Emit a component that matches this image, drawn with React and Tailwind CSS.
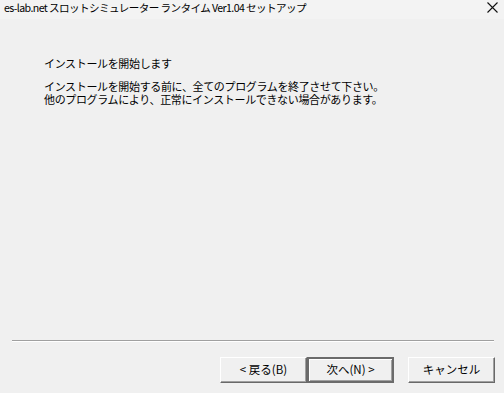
const font = { fontFamily: '"Noto Sans CJK JP", "Noto Sans", sans-serif' };

const WinButton = ({ children, isDefault }) => (
  <button
    className={`h-[26px] w-[87px] bg-[#f0f0f0] text-[11.5px] leading-none text-black flex items-center justify-center ${
      isDefault
        ? "border-2 border-[#6b6b6b] shadow-[inset_1px_1px_0_#ffffff,inset_-1px_-1px_0_#a0a0a0]"
        : "border-t border-l border-t-white border-l-white border-r border-b border-r-[#696969] border-b-[#696969] shadow-[inset_-1px_-1px_0_#a0a0a0]"
    }`}
    style={font}
  >
    {children}
  </button>
);

export default function App() {
  return (
    <div className="w-[504px] h-[393px] flex flex-col bg-[#f0f0f0] overflow-hidden" style={font}>
      {/* title bar */}
      <div className="h-[19px] bg-[#f3f3f3] flex items-start justify-between pl-[4px] pr-[6px]">
        <span className="text-[10.6px] leading-[15px] text-black tracking-[-0.6px]">
          es-lab.net スロットシミュレーター ランタイム Ver1.04 セットアップ
        </span>
        <svg width="11" height="11" viewBox="0 0 11 11" className="mt-[2px]">
          <path d="M0.5 0.5 L10.5 10.5 M10.5 0.5 L0.5 10.5" stroke="#111" strokeWidth="1.1" />
        </svg>
      </div>

      {/* body */}
      <div className="flex-1 pl-[44px] pt-[38px] text-[11px] leading-[13px] text-black tracking-[-0.35px]">
        <p>インストールを開始します</p>
        <p className="mt-[10px]">インストールを開始する前に、全てのプログラムを終了させて下さい。</p>
        <p>他のプログラムにより、正常にインストールできない場合があります。</p>
      </div>

      {/* separator */}
      <div className="ml-[12px] mr-[10px] border-t border-t-[#a0a0a0] border-b border-b-white" />

      {/* buttons */}
      <div className="flex justify-end items-center pt-[15px] pb-[10px] pr-[9px]">
        <WinButton>&lt; 戻る(B)</WinButton>
        <WinButton isDefault>次へ(N) &gt;</WinButton>
        <div className="ml-[14px]">
          <WinButton>キャンセル</WinButton>
        </div>
      </div>
    </div>
  );
}
